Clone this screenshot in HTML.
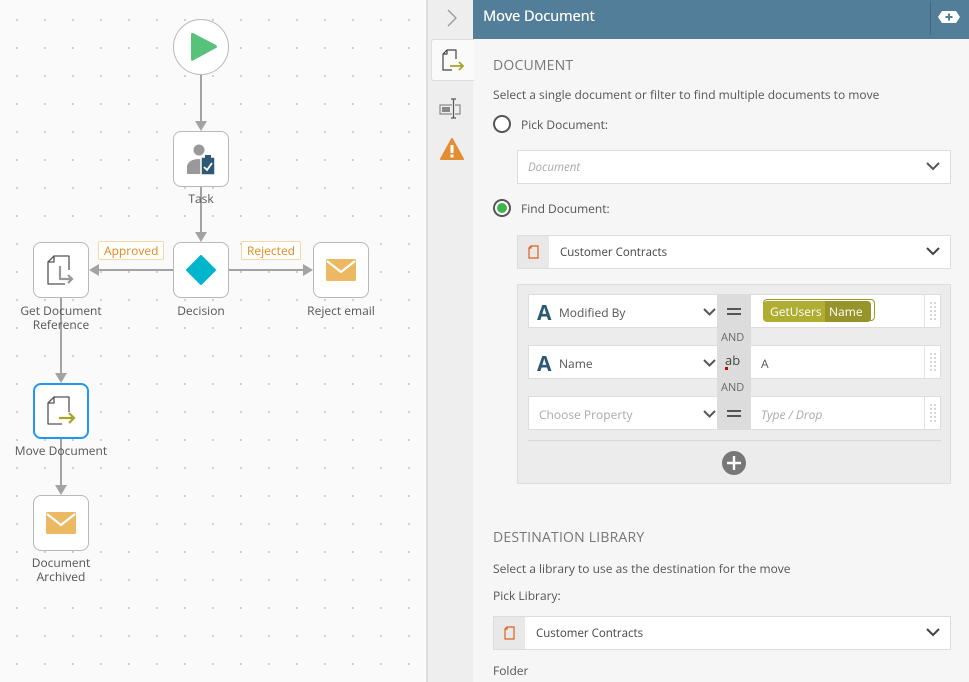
<!DOCTYPE html>
<html><head><meta charset="utf-8"><style>
*{box-sizing:border-box;margin:0;padding:0}
body{width:969px;height:682px;overflow:hidden;position:relative;font-family:"Open Sans","Liberation Sans",sans-serif;background:#f6f6f6;color:#555}
.abs{position:absolute}
#canvas{left:0;top:0;width:427px;height:682px;background-color:#fafafa;background-image:radial-gradient(circle,#c8c8c8 0.8px,transparent 1.2px);background-size:28px 28px;background-position:3px 6px;border-right:1px solid #ddd}
.node{position:absolute;width:56px;height:56px;border:1px solid #b8b8b8;border-radius:8px;background:#fff}
.lbl{position:absolute;font-size:12px;color:#555;text-align:center;line-height:14px;width:120px}
.ln{position:absolute;background:#a3a3a3}
.tag{position:absolute;border:1px solid #f6d8a8;background:#fff;color:#e08a1e;font-size:12px;height:19px;line-height:17px;padding:0 5px;border-radius:2px}
#tabs{left:427px;top:0;width:46px;height:682px;background:#eeeeee;border-left:1px solid #ddd}
#hdr{left:473px;top:0;width:496px;height:39px;background:#527e99;color:#fff;font-size:14.5px;line-height:33px;padding-left:10px;text-shadow:0.3px 0 0 #fff}
.t{position:absolute;font-size:12px;color:#555;white-space:nowrap}
.h{position:absolute;font-size:14px;color:#777;letter-spacing:.2px}
.dd{position:absolute;background:#fff;border:1px solid #ddd;height:34px}
.chev{position:absolute;right:10px;top:10px}
.row{position:absolute;height:34px;left:528px;width:413px}
.rl{position:absolute;left:0;top:0;width:189px;height:34px;background:#fff;border:1px solid #ddd;border-right:none}
.ro{position:absolute;left:189px;top:0;width:34px;height:34px;background:#dcdcdc}
.rv{position:absolute;left:223px;top:0;width:190px;height:34px;background:#fff;border:1px solid #ddd;border-left:none}
.grip{position:absolute;right:0;top:0;width:16px;height:32px;border-left:1px solid #e2e2e2;background-image:radial-gradient(circle,#ccc 0.8px,transparent 1.1px);background-size:4px 4px;background-position:4px 6px;background-repeat:repeat;background-clip:content-box;padding:6px 3px}
</style></head><body>
<div id="canvas" class="abs"></div>
<div class="ln" style="left:200px;top:75px;width:2px;height:50px"></div>
<svg class="abs" style="left:195px;top:121px" width="12" height="10"><path d="M0 0H12L6 10z" fill="#a3a3a3"/></svg>
<div class="ln" style="left:200px;top:187px;width:2px;height:49px"></div>
<svg class="abs" style="left:195px;top:232px" width="12" height="10"><path d="M0 0H12L6 10z" fill="#a3a3a3"/></svg>
<div class="ln" style="left:97px;top:269px;width:76px;height:2px"></div>
<svg class="abs" style="left:89px;top:264px" width="10" height="12"><path d="M10 0V12L0 6z" fill="#a3a3a3"/></svg>
<div class="ln" style="left:229px;top:269px;width:77px;height:2px"></div>
<svg class="abs" style="left:303px;top:264px" width="10" height="12"><path d="M0 0V12L10 6z" fill="#a3a3a3"/></svg>
<div class="ln" style="left:60px;top:298px;width:2px;height:78px"></div>
<svg class="abs" style="left:55px;top:373px" width="12" height="10"><path d="M0 0H12L6 10z" fill="#a3a3a3"/></svg>
<div class="ln" style="left:60px;top:439px;width:2px;height:50px"></div>
<svg class="abs" style="left:55px;top:485px" width="12" height="10"><path d="M0 0H12L6 10z" fill="#a3a3a3"/></svg>
<div class="abs" style="left:173px;top:19px;width:56px;height:56px;border-radius:50%;border:1px solid #b8b8b8;background:#fff"></div>
<svg class="abs" style="left:190px;top:30px" width="28" height="34"><path d="M3 3Q1 2 1 5V29Q1 32 4 30L26 18Q28 17 26 15Z" fill="#59c27a"/></svg>
<div class="node" style="left:173px;top:131px"></div>
<svg class="abs" style="left:185px;top:142px" width="34" height="34"><circle cx="14" cy="8" r="5.5" fill="#999"/><path d="M2 32V24Q4 17 14 17Q20 17 22 20V32Z" fill="#999"/><rect x="16" y="15" width="14" height="18" rx="1" fill="#2c5a75" stroke="#fff" stroke-width="1.5"/><rect x="20" y="13" width="6" height="4" fill="#2c5a75"/><path d="M19 25l3 3 5-7" stroke="#fff" stroke-width="1.8" fill="none"/></svg>
<div class="lbl" style="left:141px;top:192px">Task</div>
<div class="node" style="left:173px;top:242px"></div>
<svg class="abs" style="left:186px;top:255px" width="30" height="30"><path d="M15 1L29 15 15 29 1 15z" fill="#00b5cc" stroke="#00b5cc" stroke-linejoin="round" stroke-width="2"/></svg>
<div class="lbl" style="left:141px;top:304px">Decision</div>
<div class="tag" style="left:98px;top:241px">Approved</div>
<div class="tag" style="left:241px;top:241px">Rejected</div>
<div class="node" style="left:33px;top:242px"></div>
<svg class="abs" style="left:46px;top:254px" width="32" height="34"><path d="M8 2H23V16 M19 30H2V8L8 2V8H2" fill="none" stroke="#555" stroke-width="1.3" stroke-linejoin="round"/><path d="M14 12V25H26" fill="none" stroke="#999" stroke-width="2.2"/><path d="M22 21l4 4-4 4" fill="none" stroke="#999" stroke-width="2.2"/></svg>
<div class="lbl" style="left:1px;top:304px">Get Document<br>Reference</div>
<div class="node" style="left:313px;top:242px"></div>
<svg class="abs" style="left:326px;top:259px" width="30" height="23"><rect x="0" y="0" width="30" height="22" rx="1.5" fill="#edb862"/><path d="M1 2L15 13 29 2" fill="none" stroke="#fff" stroke-width="2.2"/></svg>
<div class="lbl" style="left:281px;top:304px">Reject email</div>
<div class="node" style="left:33px;top:383px;border:2px solid #2196f3"></div>
<svg class="abs" style="left:46px;top:395px" width="32" height="34"><path d="M8 2H23V17 M16 29H2V8L8 2V8H2" fill="none" stroke="#555" stroke-width="1.3" stroke-linejoin="round"/><path d="M13 23H28M23 18l5 5-5 5" fill="none" stroke="#a5a628" stroke-width="2.2"/></svg>
<div class="lbl" style="left:1px;top:444px">Move Document</div>
<div class="node" style="left:33px;top:495px"></div>
<svg class="abs" style="left:46px;top:512px" width="30" height="23"><rect x="0" y="0" width="30" height="22" rx="1.5" fill="#edb862"/><path d="M1 2L15 13 29 2" fill="none" stroke="#fff" stroke-width="2.2"/></svg>
<div class="lbl" style="left:1px;top:556px">Document<br>Archived</div>

<div id="tabs" class="abs"></div>
<svg class="abs" style="left:446px;top:9px" width="12" height="18"><path d="M2 1l8 8-8 8" fill="none" stroke="#999" stroke-width="1.3"/></svg>
<div class="abs" style="left:431px;top:39px;width:43px;height:42px;background:#fafafa;border:1px solid #ddd;border-right:none;border-radius:3px 0 0 3px"></div>
<svg class="abs" style="left:441px;top:48px" width="26" height="26"><path d="M6 2H15V11 M11 22H2V6L6 2V6H2" fill="none" stroke="#444" stroke-width="1.2" stroke-linejoin="round"/><path d="M9 18H22M18 14l4 4-4 4" fill="none" stroke="#a5a628" stroke-width="1.8"/></svg>
<svg class="abs" style="left:439px;top:98px" width="24" height="22"><rect x="1" y="7" width="20" height="9" fill="none" stroke="#888" stroke-width="1.2"/><rect x="3" y="9" width="8" height="5" fill="#888"/><rect x="13" y="1" width="3" height="20" fill="#eee"/><path d="M12 1H17M14.5 1V20M12 20H17" stroke="#555" stroke-width="1.2"/></svg>
<svg class="abs" style="left:440px;top:137px" width="24" height="24"><path d="M12 2L23 22H1Z" fill="#e38d35" stroke="#e38d35" stroke-linejoin="round" stroke-width="2"/><rect x="10.5" y="8" width="3" height="8" fill="#fff"/><rect x="10.5" y="17.5" width="3" height="3" fill="#fff"/></svg>

<div id="hdr" class="abs">Move Document</div>
<div class="abs" style="left:930px;top:1px;width:1px;height:34px;background:#3f6780"></div>
<svg class="abs" style="left:937px;top:10px" width="24" height="14"><path d="M5 1H19L23 7 19 13H5L1 7Z" fill="#fff"/><path d="M12 3.5V10.5M8.5 7H15.5" stroke="#527e99" stroke-width="2"/></svg>

<div class="h" style="left:493px;top:56px">DOCUMENT</div>
<div class="t" style="left:493px;top:86px">Select a single document or filter to find multiple documents to move</div>
<div class="abs" style="left:493px;top:115px;width:18px;height:18px;border:2px solid #555;border-radius:50%;background:#fff"></div>
<div class="t" style="left:521px;top:116px">Pick Document:</div>
<div class="dd" style="left:517px;top:150px;width:434px"><span class="t" style="left:10px;top:9px;font-style:italic;color:#aaa;font-size:11.5px">Document</span>
<svg class="chev" width="14" height="10"><path d="M1 2l6 6 6-6" fill="none" stroke="#555" stroke-width="2"/></svg></div>
<div class="abs" style="left:493px;top:199px;width:18px;height:18px;border:2px solid #555;border-radius:50%;background:#fff"><div class="abs" style="left:2px;top:2px;width:10px;height:10px;border-radius:50%;background:#3cb54a"></div></div>
<div class="t" style="left:521px;top:200px">Find Document:</div>
<div class="dd" style="left:517px;top:235px;width:434px"><div class="abs" style="left:0;top:0;width:31px;height:32px;background:#e8e8e8"></div>
<svg class="abs" style="left:10px;top:9px" width="12" height="14"><path d="M3 1H10V13H1V3Z M3 1V3H1" fill="none" stroke="#e0601e" stroke-width="1.2"/></svg>
<span class="t" style="left:42px;top:9px;color:#444;font-size:11.5px">Customer Contracts</span>
<svg class="chev" width="14" height="10"><path d="M1 2l6 6 6-6" fill="none" stroke="#444" stroke-width="2"/></svg></div>

<div class="abs" style="left:517px;top:284px;width:434px;height:200px;background:#ececec;border:1px solid #ddd"></div>
<div class="abs" style="left:717px;top:294px;width:34px;height:135px;background:#dcdcdc"></div>
<div class="row" style="top:294px"><div class="rl"><span class="abs" style="left:8px;top:4px;font-size:21px;font-weight:bold;color:#2c5a75">A</span><span class="t" style="left:30px;top:9px">Modified By</span><svg class="abs" style="left:174px;top:13px" width="13" height="9"><path d="M1 1l5.5 5.5L12 1" fill="none" stroke="#555" stroke-width="2"/></svg></div>
<div class="ro"><div class="abs" style="left:10px;top:14px;width:14px;height:2px;background:#555"></div><div class="abs" style="left:10px;top:19px;width:14px;height:2px;background:#555"></div></div>
<div class="rv"><div class="abs" style="left:12px;top:4px;width:112px;height:22px;border:1px solid #9a9a2a;border-radius:4px"></div><div class="abs" style="left:12px;top:6px;width:108px;height:21px;border-radius:4px;background:#afad32;overflow:hidden"><span class="abs" style="left:7px;top:2px;color:#fff;font-size:12px">GetUsers</span><div class="abs" style="left:62px;top:0;width:46px;height:21px;background:#97942c"></div><span class="abs" style="left:66px;top:2px;color:#fff;font-size:12px">Name</span></div><div class="grip"></div></div></div>
<div class="t" style="left:721px;top:330px;font-size:11px;color:#666">AND</div>
<div class="row" style="top:345px"><div class="rl"><span class="abs" style="left:8px;top:4px;font-size:21px;font-weight:bold;color:#2c5a75">A</span><span class="t" style="left:30px;top:9px">Name</span><svg class="abs" style="left:174px;top:13px" width="13" height="9"><path d="M1 1l5.5 5.5L12 1" fill="none" stroke="#555" stroke-width="2"/></svg></div>
<div class="ro"><span class="abs" style="left:8px;top:6px;font-size:13px;color:#444">ab</span><div class="abs" style="left:8px;top:22px;width:3px;height:3px;background:#c00"></div></div>
<div class="rv"><span class="t" style="left:10px;top:9px">A</span><div class="grip"></div></div></div>
<div class="t" style="left:721px;top:380px;font-size:11px;color:#666">AND</div>
<div class="row" style="top:396px"><div class="rl"><span class="t" style="left:10px;top:9px;color:#aaa">Choose Property</span><svg class="abs" style="left:174px;top:13px" width="13" height="9"><path d="M1 1l5.5 5.5L12 1" fill="none" stroke="#555" stroke-width="2"/></svg></div>
<div class="ro"><div class="abs" style="left:10px;top:14px;width:14px;height:2px;background:#555"></div><div class="abs" style="left:10px;top:19px;width:14px;height:2px;background:#555"></div></div>
<div class="rv"><span class="t" style="left:10px;top:9px;color:#aaa;font-style:italic">Type / Drop</span><div class="grip"></div></div></div>
<div class="abs" style="left:528px;top:440px;width:413px;height:1px;background:#d8d8d8"></div>
<svg class="abs" style="left:722px;top:451px" width="24" height="24"><circle cx="12" cy="12" r="12" fill="#777"/><path d="M12 5V19M5 12H19" stroke="#fff" stroke-width="2.4"/></svg>

<div class="h" style="left:493px;top:528px">DESTINATION LIBRARY</div>
<div class="t" style="left:493px;top:560px">Select a library to use as the destination for the move</div>
<div class="t" style="left:493px;top:587px">Pick Library:</div>
<div class="dd" style="left:493px;top:616px;width:458px"><div class="abs" style="left:0;top:0;width:31px;height:32px;background:#e8e8e8"></div>
<svg class="abs" style="left:10px;top:9px" width="12" height="14"><path d="M3 1H10V13H1V3Z M3 1V3H1" fill="none" stroke="#e0601e" stroke-width="1.2"/></svg>
<span class="t" style="left:42px;top:9px;color:#444;font-size:11.5px">Customer Contracts</span>
<svg class="chev" width="14" height="10"><path d="M1 2l6 6 6-6" fill="none" stroke="#444" stroke-width="2"/></svg></div>
<div class="t" style="left:493px;top:662px">Folder</div>
</body></html>
